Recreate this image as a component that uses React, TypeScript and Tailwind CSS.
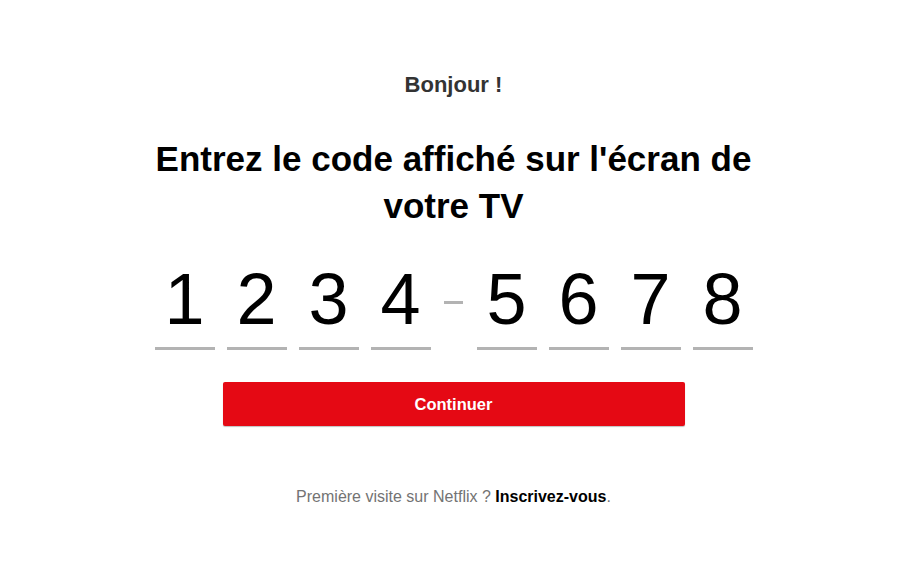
import React from "react";

const digitsA = ["1", "2", "3", "4"];
const digitsB = ["5", "6", "7", "8"];

function DigitBox({ value }: { value: string }) {
  return (
    <div className="flex w-[60px] flex-col items-center">
      <span className="text-[72px] leading-[80px] text-black">{value}</span>
      <div className="mt-[8px] h-[3px] w-full bg-[#b3b3b3]" />
    </div>
  );
}

export default function App() {
  return (
    <div
      className="flex min-h-screen flex-col items-center bg-white pr-[6px] pt-[71px]"
      style={{ fontFamily: '"Liberation Sans", Arial, sans-serif' }}
    >
      <h2 className="text-[22px] font-bold leading-[28px] text-[#333]">Bonjour !</h2>

      <h1 className="mt-[36px] w-[640px] text-center text-[35px] font-bold leading-[47px] text-black">
        Entrez le code affiché sur l'écran de votre TV
      </h1>

      <div className="mt-[30px] flex items-start">
        <div className="flex gap-[12px]">
          {digitsA.map((d) => (
            <DigitBox key={d} value={d} />
          ))}
        </div>
        <div className="flex h-[80px] w-[46px] items-center justify-center">
          <div className="mt-[6px] h-[3px] w-[19px] bg-[#b3b3b3]" />
        </div>
        <div className="flex gap-[12px]">
          {digitsB.map((d) => (
            <DigitBox key={d} value={d} />
          ))}
        </div>
      </div>

      <button className="mt-[32px] h-[44px] w-[462px] rounded-[2px] bg-[#e50914] text-[16.5px] font-bold text-white shadow-[0_1px_1px_rgba(0,0,0,0.25)]">
        Continuer
      </button>

      <p className="mt-[59px] text-[16px] text-[#737373]">
        Première visite sur Netflix ? <span className="font-bold text-black">Inscrivez-vous</span>.
      </p>
    </div>
  );
}
